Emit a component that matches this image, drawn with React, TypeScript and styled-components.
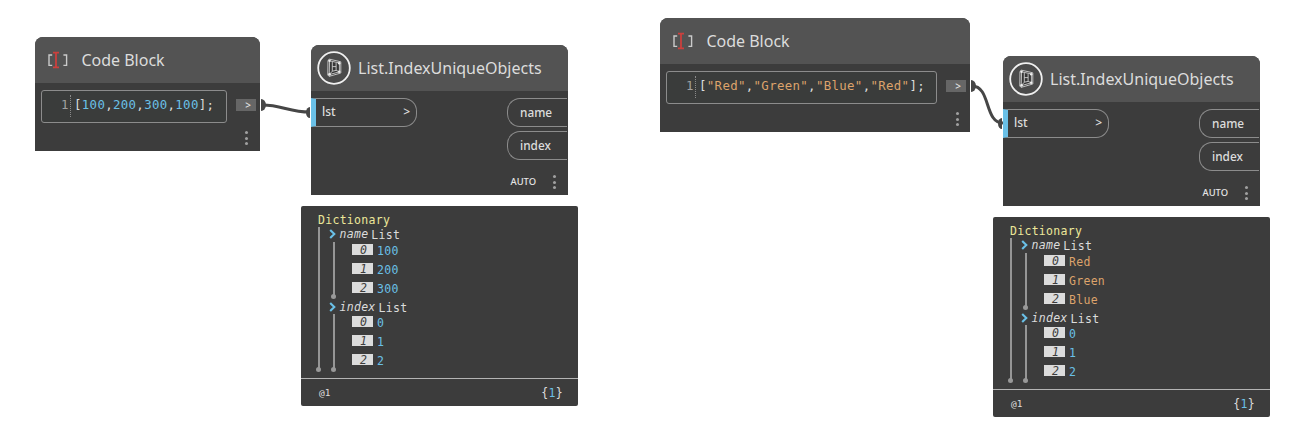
import React from "react";
import styled, { createGlobalStyle } from "styled-components";

const Global = createGlobalStyle`
  * { box-sizing: border-box; }
  body { margin: 0; background: #fff; overflow: hidden; }
`;

const SANS = `"Noto Sans", "Open Sans", sans-serif`;
const MONO = `"DejaVu Sans Mono", "Liberation Mono", monospace`;
const BLUE = "#6ac0e7";
const ORANGE = "#dda36b";

const Canvas = styled.main`
  position: relative;
  width: 1294px;
  height: 428px;
  background: #fff;
  font-family: ${SANS};
`;

const Wires = styled.svg`
  position: absolute;
  inset: 0;
`;

const Node = styled.section<{ $x: number; $y: number; $w: number; $h: number }>`
  position: absolute;
  left: ${(p) => p.$x}px;
  top: ${(p) => p.$y}px;
  width: ${(p) => p.$w}px;
  height: ${(p) => p.$h}px;
  display: flex;
  flex-direction: column;
  background: #3c3c3c;
  border-radius: 8px 8px 0 0;
  overflow: hidden;
`;

const Header = styled.header<{ $pad: number; $gap: number }>`
  flex: 0 0 46px;
  display: flex;
  align-items: center;
  gap: ${(p) => p.$gap}px;
  padding-left: ${(p) => p.$pad}px;
  background: #535353;
`;

const Title = styled.h2`
  margin: 0;
  font: 400 16px/22px ${SANS};
  color: #dcdcdc;
  white-space: nowrap;
`;

const CodeRow = styled.div`
  display: flex;
  justify-content: space-between;
  padding: 7px 4px 0 6px;
`;

const Editor = styled.div<{ $w: number }>`
  width: ${(p) => p.$w}px;
  height: 33px;
  display: flex;
  padding: 4px 0 0 19px;
  border: 1px solid #8c8c8c;
  border-radius: 3px;
  background: #3a3c3b;
  font: 12.4px/19px ${MONO};
  letter-spacing: 0.33px;
  white-space: pre;
`;

const LineNo = styled.span`
  width: 10px;
  height: 22px;
  border-right: 1px dotted #8a8a8a;
  color: #a0a0a0;
`;

const Code = styled.code`
  padding-left: 3px;
  font: inherit;
  color: #dcdcdc;
`;

const Tint = styled.span<{ $c: string }>`
  color: ${(p) => p.$c};
`;

const OutPort = styled.span`
  width: 20px;
  height: 12px;
  margin-top: 9px;
  padding-right: 5px;
  background: #666;
  color: #e6e6e6;
  font: 500 10px/12px ${SANS};
  text-align: right;
`;

const MenuDots = styled.span`
  width: 3px;
  height: 14px;
  display: flex;
  flex-direction: column;
  justify-content: space-between;
  i { width: 3px; height: 3px; border-radius: 50%; background: #a0a0a0; }
`;

const CodeFoot = styled.footer<{ $right: number }>`
  display: flex;
  justify-content: flex-end;
  padding: 8px ${(p) => p.$right}px 0 0;
`;

const Ports = styled.div`
  display: flex;
  justify-content: space-between;
  padding: 7px 1px 0 0;
`;

const InPort = styled.div`
  width: 106px;
  height: 29px;
  display: flex;
  justify-content: space-between;
  padding: 0 6px 0 6px;
  border: 1px solid #8c8c8c;
  border-left: 5px solid ${BLUE};
  border-radius: 0 13px 13px 0;
  color: #dcdcdc;
  font: 500 12px/26px ${SANS};
`;

const Outs = styled.div`
  display: flex;
  flex-direction: column;
  gap: 4px;
`;

const Out = styled.div`
  width: 60px;
  height: 29px;
  padding-left: 12px;
  border: 1px solid #8c8c8c;
  border-right: 0;
  border-radius: 13px 0 0 13px;
  color: #dcdcdc;
  font: 500 11.8px/27px ${SANS};
`;

const NodeFoot = styled.footer`
  display: flex;
  justify-content: flex-end;
  align-items: center;
  gap: 17px;
  padding: 15px 12px 0 0;
  color: #e6e6e6;
  font: 500 9.4px/14px ${SANS};
`;

const Preview = styled.section<{ $x: number; $y: number }>`
  position: absolute;
  left: ${(p) => p.$x}px;
  top: ${(p) => p.$y}px;
  width: 277px;
  height: 200px;
  display: flex;
  flex-direction: column;
  border-radius: 2px;
  background: #3c3c3c;
  font: 11.5px/16px ${MONO};
  letter-spacing: 0.29px;
  color: #dcdcdc;
`;

const Tree = styled.div`
  flex: 0 0 172px;
  padding: 5px 0 0 17px;
`;

const Root = styled.div`
  height: 15px;
  padding-top: 1px;
  color: #ece79a;
`;

const Branch = styled.div<{ $indent: number; $h: number }>`
  height: ${(p) => p.$h}px;
  display: flex;
  margin-left: ${(p) => p.$indent}px;
`;

const Guide = styled.span<{ $top: number }>`
  position: relative;
  flex: 0 0 1.5px;
  margin: ${(p) => p.$top}px 0.5px 0 0;
  background: #969696;
  &::after {
    content: "";
    position: absolute;
    left: -2px;
    bottom: -2px;
    width: 5px;
    height: 5px;
    border-radius: 50%;
    background: #999;
  }
`;

const GroupHead = styled.div<{ $gap: number; $h: number }>`
  height: ${(p) => p.$h}px;
  display: flex;
  margin: ${(p) => p.$gap}px 0 0 8px;
  svg { margin: 3px 4px 0 0.5px; flex: none; }
  em { margin: 0 3px 0 0; }
  span { margin-top: 1px; }
`;

const Item = styled.div`
  height: 19px;
  display: flex;
  align-items: center;
  padding-left: 17px;
`;

const Value = styled.span<{ $c: string }>`
  padding-top: 2px;
  color: ${(p) => p.$c};
`;

const Chip = styled.span`
  width: 21px;
  height: 11px;
  margin-right: 4px;
  padding-left: 2px;
  background: #dcdcdc;
  color: #3c3c3c;
  font: italic 11.5px/12px ${MONO};
  text-align: center;
`;

const PreviewFoot = styled.footer`
  flex: 1;
  display: flex;
  justify-content: space-between;
  align-items: center;
  padding: 0 15px 0 18px;
  border-top: 1px solid #b4b4b4;
`;

const Small = styled.span`
  font-size: 9.5px;
  letter-spacing: 0;
`;

const CodeIcon = () => (
  <svg width="22" height="20" viewBox="0 0 22 20" fill="none">
    <path d="M5.2 5H2v10.4h3.2M16.4 5h3.2v10.4h-3.2" stroke="#cacaca" strokeWidth="1.4" />
    <path d="M6 2.7h6M6 17.3h6M9 2.6v15" stroke="#cc403d" strokeWidth="1.8" />
  </svg>
);

const ListIcon = () => (
  <svg width="34" height="34" viewBox="0 0 34 34" fill="none">
    <circle cx="17" cy="17" r="15.8" fill="#4a4a4a" stroke="#f0f0f0" strokeWidth="1.8" />
    <path d="M11 9.4 12.5 8.2 23.8 10.8V22L12 25.4 10.8 24Z" fill="#353535" stroke="#d4d4d4" strokeWidth=".9" strokeLinejoin="round" />
    <g stroke="#cfcfcf" strokeWidth=".9">
      <path d="M12.6 9.8 22.4 12M12.6 9.8 12.2 23.6M22.4 12v8.8M12.4 23.6l10-2.8" />
      <path d="M15.3 11v9.2l3.8-.8v-7.3M15.3 15.6h3.8M15.3 20.2l-2.9 3.2M19.1 19.4l3.3 1.4" />
    </g>
    <g fill="#eee">
      <circle cx="12.5" cy="9.8" r="1.2" />
      <circle cx="22.2" cy="12.2" r="1.2" />
      <circle cx="22.2" cy="20.8" r="1.2" />
      <circle cx="12.5" cy="23.4" r="1.3" />
    </g>
  </svg>
);

const Chevron = () => (
  <svg width="7" height="10" viewBox="0 0 7 10" fill="none">
    <path d="M1.2 1 5.3 5 1.2 9" stroke={BLUE} strokeWidth="2.1" />
  </svg>
);

const Dots = () => (
  <MenuDots><i /><i /><i /></MenuDots>
);

type CodeProps = { x: number; y: number; w: number; color: string; values: string[]; dotsRight: number };

const CodeBlock = ({ x, y, w, color, values, dotsRight }: CodeProps) => (
  <Node $x={x} $y={y} $w={w} $h={114}>
    <Header $pad={12} $gap={12.4}>
      <CodeIcon />
      <Title>Code Block</Title>
    </Header>
    <CodeRow>
      <Editor $w={w - 39}>
        <LineNo>1</LineNo>
        <Code>
          [{values.map((v, i) => (
            <React.Fragment key={i}>{i > 0 && ","}<Tint $c={color}>{v}</Tint></React.Fragment>
          ))}];
        </Code>
      </Editor>
      <OutPort>&gt;</OutPort>
    </CodeRow>
    <CodeFoot $right={dotsRight}><Dots /></CodeFoot>
  </Node>
);

const ListNode = ({ x, y }: { x: number; y: number }) => (
  <Node $x={x} $y={y} $w={257} $h={150}>
    <Header $pad={6} $gap={7}>
      <ListIcon />
      <Title>List.IndexUniqueObjects</Title>
    </Header>
    <Ports>
      <InPort><span>lst</span><span>&gt;</span></InPort>
      <Outs><Out>name</Out><Out>index</Out></Outs>
    </Ports>
    <NodeFoot>AUTO<Dots /></NodeFoot>
  </Node>
);

type GroupProps = { name: string; items: string[]; color: string; gap: number; head: number; guide: number };

const Group = ({ name, items, color, gap, head, guide }: GroupProps) => (
  <div>
    <GroupHead $gap={gap} $h={head}>
      <Chevron /><em>{name}</em><span>List</span>
    </GroupHead>
    <Branch $indent={13} $h={guide}>
      <Guide $top={2} />
      <div>
        {items.map((v, i) => (
          <Item key={i}><Chip>{i}</Chip><Value $c={color}>{v}</Value></Item>
        ))}
      </div>
    </Branch>
  </div>
);

const PreviewPanel = ({ x, y, items, color }: { x: number; y: number; items: string[]; color: string }) => (
  <Preview $x={x} $y={y}>
    <Tree>
      <Root>Dictionary</Root>
      <Branch $indent={0} $h={144}>
        <Guide $top={1} />
        <div>
          <Group name="name" items={items} color={color} gap={0} head={14} guide={57} />
          <Group name="index" items={["0", "1", "2"]} color={BLUE} gap={2} head={13} guide={58} />
        </div>
      </Branch>
    </Tree>
    <PreviewFoot>
      <Small>@1</Small>
      <span>{"{"}<Tint $c={BLUE}>1</Tint>{"}"}</span>
    </PreviewFoot>
  </Preview>
);

export default function App() {
  return (
    <>
      <Global />
      <Canvas>
        <Wires width="1294" height="428" fill="none">
          <g stroke="#464646" strokeWidth="3">
            <path d="M262 105C282 105 289 112 310 112" />
            <path d="M972 86C991 86 984 123 1003 123" />
          </g>
          <g fill="#464646">
            <path d="M261 99a5 6 0 0 1 0 12Z" />
            <path d="M310 107a4 5.5 0 0 0 0 11Z" />
            <path d="M971 80a5 6 0 0 1 0 12Z" />
            <path d="M1002 118a4 5.5 0 0 0 0 11Z" />
          </g>
        </Wires>
        <CodeBlock x={35} y={37} w={225} color={BLUE} values={["100", "200", "300", "100"]} dotsRight={12} />
        <ListNode x={311} y={45} />
        <PreviewPanel x={301} y={206} items={["100", "200", "300"]} color={BLUE} />
        <CodeBlock x={660} y={18} w={310} color={ORANGE} values={['"Red"', '"Green"', '"Blue"', '"Red"']} dotsRight={11} />
        <ListNode x={1003} y={56} />
        <PreviewPanel x={993} y={217} items={["Red", "Green", "Blue"]} color={ORANGE} />
      </Canvas>
    </>
  );
}
